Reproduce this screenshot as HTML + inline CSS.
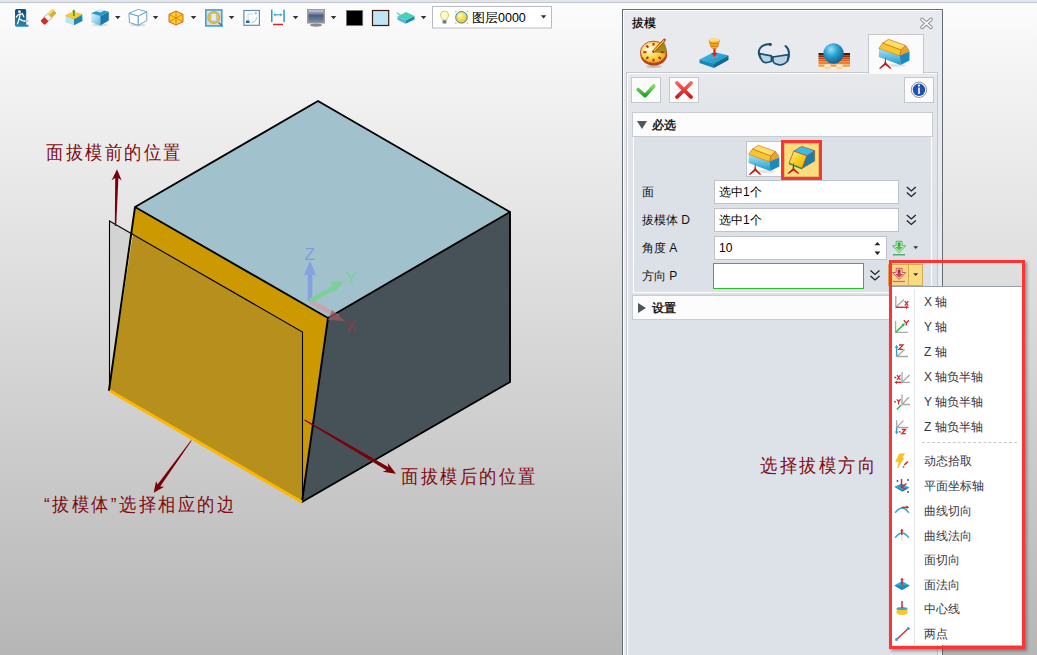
<!DOCTYPE html>
<html><head><meta charset="utf-8">
<style>
*{margin:0;padding:0;box-sizing:border-box}
html,body{width:1037px;height:655px;overflow:hidden}
body{position:relative;font-family:"Liberation Sans",sans-serif;background:linear-gradient(to bottom,#fdfdfd 0px,#f7f7f7 40px,#b6b6b6 655px);}
.a{position:absolute}
#topband{left:0;top:0;width:1037px;height:3px;background:#e1e4e8;border-bottom:1px solid #c3c7cd}
.note{position:absolute;color:#7e0a12;font-size:17px;letter-spacing:2.55px;white-space:nowrap;line-height:20px;transform:scaleY(1.1);transform-origin:0 0}
/* panel */
#panel{left:622px;top:9px;width:321px;height:660px;background:#e8eaed;border:1px solid #646c76;border-bottom:none;box-shadow:inset 1px 1px 0 #fff}
#title{left:9px;top:5px;font-size:12px;font-weight:500;color:#000;line-height:16px;-webkit-text-stroke:0.25px #000}
#tabpage{left:3px;top:62px;width:312px;height:600px;background:linear-gradient(#e7e9ec 0,#e2e5e9 40px,#dde1e8 240px);border:1px solid #c4c8ce;box-shadow:inset 1px 1px 0 #fff}
#acttab{left:245px;top:24px;width:56px;height:40px;background:#fbfbfb;border:1px solid #c4c8ce;border-bottom:none}
.btn{position:absolute;width:30px;height:26px;background:#fbfbfb;border:1px solid #c4c8cd}
.sechdr{position:absolute;left:9px;width:301px;height:25px;background:#fcfcfc;border:1px solid #c8ccd1}
.sechdr span{position:absolute;left:19px;top:4px;font-size:12px;font-weight:bold;color:#222}
.tri-d{position:absolute;left:4px;top:8px;width:0;height:0;border-left:5px solid transparent;border-right:5px solid transparent;border-top:8px solid #50555c}
.tri-r{position:absolute;left:5px;top:7px;width:0;height:0;border-top:5px solid transparent;border-bottom:5px solid transparent;border-left:8px solid #50555c}
#seccont{left:10px;top:127px;width:299px;height:156px;background:#dce0e7;border:1px solid #fff;border-top:none}
.lbl{position:absolute;font-size:12px;color:#111;white-space:nowrap;font-weight:500}
.inp{position:absolute;background:#fff;border:1px solid #bfc3c9;font-size:12px;color:#000;font-weight:500;padding-left:4px;line-height:22px}
.mi{font-size:12px;color:#363646;white-space:nowrap;line-height:16px}
</style></head>
<body>
<div id="topband" class="a"></div>


<!-- toolbar -->
<svg class="a" style="left:0;top:0" width="600" height="34" viewBox="0 0 600 34">
  <defs>
    <linearGradient id="gExit" x1="0" y1="0" x2="0" y2="1"><stop offset="0" stop-color="#0f4a78"/><stop offset="1" stop-color="#2a86b4"/></linearGradient>
    <linearGradient id="gCubeL" x1="0" y1="0" x2="1" y2="1"><stop offset="0" stop-color="#e4f6fc"/><stop offset="1" stop-color="#5cb8e0"/></linearGradient>
    <linearGradient id="gCubeT" x1="0" y1="0" x2="1" y2="0"><stop offset="0" stop-color="#2a9ac8"/><stop offset="0.5" stop-color="#7cc8e6"/><stop offset="1" stop-color="#1a84b8"/></linearGradient>
    <linearGradient id="gMon" x1="0" y1="0" x2="0" y2="1"><stop offset="0" stop-color="#c8d0dc"/><stop offset="0.45" stop-color="#4a5e80"/><stop offset="1" stop-color="#7a8cac"/></linearGradient>
    <radialGradient id="gSun" cx="0.4" cy="0.35" r="0.7"><stop offset="0" stop-color="#fff8b0"/><stop offset="1" stop-color="#e8c400"/></radialGradient>
  </defs>
  <!-- exit -->
  <path d="M16.6,9 h8 a1.6,1.6 0 0 1 1.6,1.6 v14.2 h2.2 v1.9 h-11.8 a1.6,1.6 0 0 1 -1.6,-1.6 v-14.5 a1.6,1.6 0 0 1 1.6,-1.6z" fill="url(#gExit)"/>
  <rect x="24.2" y="20.2" width="4.2" height="1.8" fill="#a8d4e8"/>
  <circle cx="19.4" cy="11.7" r="1.35" fill="#fff"/>
  <g stroke="#fff" stroke-width="1.25" fill="none" stroke-linecap="round" stroke-linejoin="round">
    <path d="M20.2,13.8 L19.2,19"/>
    <path d="M16.3,17 L18.3,14.6 L20.5,14.2 L22.3,13.6 L23.8,16.6"/>
    <path d="M19.2,19 L17.5,23.8"/>
    <path d="M19.3,19 L22.4,20.6 L24.3,21.2"/>
  </g>
  <!-- eraser -->
  <g transform="rotate(-45 48.5 17)">
    <rect x="40" y="14" width="6" height="6" rx="1.2" fill="#d42a2a"/>
    <rect x="45.5" y="14" width="5" height="6" fill="#f4f4f4" stroke="#8a8a8a" stroke-width="0.6"/>
    <rect x="50.5" y="14" width="6.5" height="6" rx="1" fill="#d8b030"/>
    <rect x="50.5" y="14" width="6.5" height="2.2" fill="#f0dc70"/>
  </g>
  <!-- box with arrow -->
  <polygon points="65.5,15.6 74,19 74,25.2 65.5,22.5" fill="#b8e4f4"/>
  <polygon points="74,19 82.2,14.4 82.5,21 74,25.2" fill="#1f86b8"/>
  <polygon points="65.5,15.6 73.3,12 82.2,14.4 74,19" fill="#f6d21c" stroke="#e09a40" stroke-width="0.5"/>
  <line x1="73.8" y1="16" x2="73.8" y2="11" stroke="#2aa040" stroke-width="1.6"/>
  <polygon points="72,11.5 75.6,11.5 73.8,9.5" fill="#2aa040"/>
  <!-- blue cube -->
  <ellipse cx="100" cy="25" rx="8" ry="1.5" fill="#000" opacity="0.12"/>
  <polygon points="91,13.3 100.3,16 100.3,25.6 91.4,22.5" fill="url(#gCubeL)"/>
  <polygon points="100.3,16 108.8,11.7 108.8,20.6 100.3,25.6" fill="#1a78ac"/>
  <polygon points="91,13.3 100.3,9.4 108.8,11.7 100.3,16" fill="#2a98c4"/>
  <polygon points="96,11.3 100.3,9.4 104.5,10.5 100.5,12.5" fill="#e8f6fc" opacity="0.9"/>
  <!-- wire cube -->
  <ellipse cx="138" cy="25" rx="8" ry="1.5" fill="#000" opacity="0.12"/>
  <g fill="#fff" stroke="#5b9ec4" stroke-width="0.9" stroke-linejoin="round">
    <polygon points="129,13.3 138.3,16 138.3,25.3 129.4,22.5"/>
    <polygon points="138.3,16 146.8,11.7 146.8,20.6 138.3,25.3"/>
    <polygon points="129,13.3 138.3,9.4 146.8,11.7 138.3,16"/>
  </g>
  <!-- orange cube -->
  <g stroke="#d2502a" stroke-width="0.9" stroke-linejoin="round">
    <polygon points="176,11 183,14.3 183,21.8 176,25 169,21.8 169,14.3" fill="#fad020"/>
    <path d="M169,14.3 L183,21.8 M183,14.3 L169,21.8 M176,11 L176,25" fill="none" stroke="#e07020" stroke-width="0.8"/>
  </g>
  <!-- zoom icon -->
  <rect x="205.8" y="9.9" width="16" height="16" fill="#d8dde2" stroke="#3aa4d4" stroke-width="1.6"/>
  <circle cx="213.8" cy="17.5" r="6" fill="#f2c420" stroke="#9a9a9a" stroke-width="0.8"/>
  <rect x="211" y="13.5" width="5.5" height="7.5" fill="#e0ecf4" stroke="#a0b0c0" stroke-width="0.5"/>
  <line x1="218.5" y1="22.5" x2="222.5" y2="26.3" stroke="#4a7aa0" stroke-width="1.4"/>
  <!-- fit window -->
  <rect x="243.9" y="10.5" width="15.5" height="14.8" fill="#fff" stroke="#6a8aa6" stroke-width="1.2"/>
  <path d="M248,20 v-6 h5" fill="none" stroke="#6ac0e0" stroke-width="0.8" stroke-dasharray="1.5,0.8"/>
  <path d="M256.5,17 q0,5 -5,5.5" fill="none" stroke="#6ac0e0" stroke-width="0.8"/>
  <rect x="246" y="20.5" width="3.5" height="2.5" fill="#1a6aa0"/>
  <circle cx="255.8" cy="13.2" r="1.2" fill="#8ad0ec"/>
  <!-- dimension -->
  <rect x="271" y="9.6" width="1.5" height="12.5" fill="#2a9ac8"/>
  <rect x="283.3" y="9.6" width="1.5" height="12.5" fill="#2a9ac8"/>
  <line x1="274.5" y1="14.8" x2="281.3" y2="14.8" stroke="#3aaad4" stroke-width="1.2"/>
  <polygon points="273.3,14.8 275.5,13.2 275.5,16.4" fill="#3aaad4"/>
  <polygon points="282.5,14.8 280.3,13.2 280.3,16.4" fill="#3aaad4"/>
  <line x1="273" y1="24.5" x2="283" y2="24.5" stroke="#d02828" stroke-width="1.5"/>
  <!-- monitor -->
  <ellipse cx="316" cy="25.2" rx="6" ry="1.6" fill="#8a8a8a"/>
  <rect x="307" y="9" width="18" height="14.5" fill="#9a9a9a"/>
  <rect x="308.5" y="10.2" width="15" height="12" fill="url(#gMon)"/>
  <!-- color squares -->
  <rect x="346.5" y="10.5" width="16.2" height="15" fill="#000" stroke="#777" stroke-width="0.8"/>
  <rect x="372.5" y="10.5" width="16.2" height="15" fill="#bee6f4" stroke="#3a1a10" stroke-width="1.2"/>
  <!-- teal box -->
  <polygon points="397.5,16.5 405.5,20.5 405.5,23.8 397.5,19.8" fill="#5ab0d0"/>
  <polygon points="405.5,20.5 414.5,16 414.5,19.5 405.5,23.8" fill="#1e88b0"/>
  <polygon points="397.5,16.5 406,12 414.5,16 405.5,20.5" fill="#48d0b8"/>
  <path d="M397,12.5 q2,3 5,3.5" fill="none" stroke="#48c0b0" stroke-width="1.2"/>
  <!-- carets -->
  <g fill="#333">
    <polygon points="115,16 120.5,16 117.75,19.2"/>
    <polygon points="152.8,16 158.3,16 155.55,19.2"/>
    <polygon points="190.8,16 196.3,16 193.55,19.2"/>
    <polygon points="228.8,16 234.3,16 231.55,19.2"/>
    <polygon points="292.8,16 298.3,16 295.55,19.2"/>
    <polygon points="330.8,16 336.3,16 333.55,19.2"/>
    <polygon points="420.8,16 426.3,16 423.55,19.2"/>
      </g>
  <!-- combo -->
  <rect x="432.5" y="6.5" width="119" height="21.5" fill="#fff" stroke="#b8bcc4" stroke-width="1"/>
  <path d="M444.5,11 a4,4 0 0 1 4,4 c0,2 -1.5,3 -1.8,5 h-4.4 c-0.3,-2 -1.8,-3 -1.8,-5 a4,4 0 0 1 4,-4z" fill="#fffbd0" stroke="#d8c040" stroke-width="0.9"/>
  <rect x="442.6" y="20.3" width="3.8" height="3.2" fill="#6a74a0"/>
  <circle cx="461.5" cy="17.3" r="5.8" fill="url(#gSun)" stroke="#2a70c0" stroke-width="0.9"/>
  <g fill="#e8d020"><rect x="455" y="10.8" width="1.6" height="1.6"/><rect x="466.6" y="10.8" width="1.6" height="1.6"/><rect x="455" y="22.2" width="1.6" height="1.6"/><rect x="466.6" y="22.2" width="1.6" height="1.6"/></g>
  <text x="472" y="22.3" font-family="Liberation Sans" font-size="12.5" fill="#000">图层0000</text>
  <polygon points="540.8,15.2 546.3,15.2 543.55,18.4" fill="#333"/>
</svg>

<!-- 3D scene -->
<svg class="a" style="left:0;top:0" width="1037" height="655" viewBox="0 0 1037 655">
  <!-- top face -->
  <polygon points="318,101 510,212 328,318 135,207" fill="#a1c1cd"/>
  <!-- right face -->
  <polygon points="328,318 510,212 510,382 302,502" fill="#465158"/>
  <!-- orange face bright -->
  <polygon points="135,207 328,318 302,502 109,390" fill="#cc9900"/>
  <!-- ghost only region -->
  <polygon points="109,221 302,332 302,502 109,390" fill="#d0d0d0" fill-opacity="0.0"/>
  <polygon points="109,221 133,235 109,390" fill="#d3d3d3"/>
  <!-- overlap -->
  <polygon points="133,235 302,332 302,502 109,390" fill="#b68f1c"/>
  <!-- ghost edges -->
  <polyline points="109.5,390 109.5,221 302.5,332 302.5,502" fill="none" stroke="#000" stroke-width="1.1"/>
  <!-- cube edges -->
  <polygon points="318,101 510,212 510,382 302,502 109,390 135,207" fill="none" stroke="#000" stroke-width="1.9" stroke-linejoin="miter"/>
  <polyline points="135,207 328,318 510,212" fill="none" stroke="#000" stroke-width="1.9"/>
  <line x1="328" y1="318" x2="302" y2="502" stroke="#000" stroke-width="1.9"/>
  <line x1="109.5" y1="390.5" x2="302" y2="502" stroke="#ffb800" stroke-width="3"/>
  <!-- triad -->
  <g opacity="0.75">
    <line x1="310" y1="301" x2="338" y2="317" stroke="#d89aa0" stroke-width="4.5"/>
    <polygon points="332,310 345,321 328,320" fill="#9a5a60"/>
    <line x1="310" y1="301" x2="310" y2="273" stroke="#7a98e6" stroke-width="4.5"/>
    <polygon points="304,275 316,275 310,261" fill="#7a98e6"/>
    <line x1="310" y1="301" x2="334" y2="288" stroke="#6fd58a" stroke-width="4.5"/>
    <polygon points="330,282 344,281 335,292" fill="#6fd58a"/>
  </g>
  <text x="304.5" y="259.6" font-family="Liberation Sans" font-size="17" fill="#7a98e6" opacity="0.85">Z</text>
  <text x="345.5" y="283.5" font-family="Liberation Sans" font-size="17" fill="#70d890" opacity="0.85">Y</text>
  <text x="345.5" y="332" font-family="Liberation Sans" font-size="17" fill="#8a4048" opacity="0.85">X</text>
  <!-- annotation arrows -->
  <g fill="#7a0008" stroke="none">
<polygon points="116.2,226.0 118.4,178.1 121.7,180.4 117.0,169.3 111.7,180.2 115.2,178.1 114.8,226.0"/>
<polygon points="191.0,440.3 157.5,484.6 156.1,480.9 153.7,492.7 164.2,486.7 160.2,486.6 191.6,440.7"/>
<polygon points="304.3,420.5 386.5,470.2 382.7,471.7 396.0,473.7 387.8,463.1 388.3,467.1 304.9,419.5"/>
<polygon points="890.8,480.3 829.4,479.3 831.6,476.1 820.6,481.0 831.6,486.1 829.4,482.9 890.8,482.5"/>
  </g>
</svg>

<div class="note" style="left:46px;top:142px">面拔模前的位置</div>
<div class="note" style="left:44px;top:494px">“拔模体”选择相应的边</div>
<div class="note" style="left:401px;top:466px">面拔模后的位置</div>

<!-- panel -->
<div id="panel" class="a">
  <div id="title" class="a">拔模</div>
  <div id="tabpage" class="a"></div>
  <div id="acttab" class="a"></div>
  <div class="btn" style="left:8px;top:67px"></div>
  <div class="btn" style="left:46px;top:67px"></div>
  <div class="btn" style="left:281px;top:67px"></div>
  <div class="sechdr" style="top:102px"><div class="tri-d"></div><span>必选</span></div>
  <div id="seccont" class="a"></div>
  <div class="lbl" style="left:19px;top:174px">面</div>
  <div class="lbl" style="left:19px;top:202px">拔模体 D</div>
  <div class="lbl" style="left:19px;top:230px">角度 A</div>
  <div class="lbl" style="left:19px;top:258px">方向 P</div>
  <div class="inp" style="left:91px;top:170px;width:185px;height:24px">选中1个</div>
  <div class="inp" style="left:91px;top:198px;width:185px;height:24px">选中1个</div>
  <div class="inp" style="left:91px;top:226px;width:173px;height:24px">10</div>
  <div class="inp" style="left:90px;top:253px;width:151px;height:26px;border:1.6px solid #28c028"></div>
  <div class="sechdr" style="top:285px;height:25px"><div class="tri-r"></div><span>设置</span></div>
</div>


<!-- panel icons overlay -->
<svg class="a" style="left:0;top:0" width="1037" height="655" viewBox="0 0 1037 655">
  <defs>
    <radialGradient id="gClock" cx="0.35" cy="0.35" r="0.75"><stop offset="0" stop-color="#fffbe8"/><stop offset="0.6" stop-color="#f8d040"/><stop offset="1" stop-color="#e0a020"/></radialGradient>
    <linearGradient id="gPlate" x1="0" y1="0" x2="1" y2="1"><stop offset="0" stop-color="#40c0e8"/><stop offset="1" stop-color="#1890c0"/></linearGradient>
    <radialGradient id="gSphere" cx="0.38" cy="0.3" r="0.75"><stop offset="0" stop-color="#9ae0f4"/><stop offset="0.45" stop-color="#2aa0d0"/><stop offset="1" stop-color="#0a5a8a"/></radialGradient>
    <linearGradient id="gGold" x1="0" y1="0" x2="1" y2="1"><stop offset="0" stop-color="#fff0a0"/><stop offset="0.5" stop-color="#f8d020"/><stop offset="1" stop-color="#e8a818"/></linearGradient>
    <linearGradient id="gBlue" x1="0" y1="0" x2="0" y2="1"><stop offset="0" stop-color="#a0e4f8"/><stop offset="1" stop-color="#1a98c8"/></linearGradient>
    <linearGradient id="gCheck" x1="0" y1="0" x2="0" y2="1"><stop offset="0" stop-color="#7ae060"/><stop offset="1" stop-color="#20a020"/></linearGradient>
    <linearGradient id="gX" x1="0" y1="0" x2="0" y2="1"><stop offset="0" stop-color="#ff6060"/><stop offset="1" stop-color="#d01818"/></linearGradient>
    <linearGradient id="gGreenArr" x1="0" y1="0" x2="0" y2="1"><stop offset="0" stop-color="#20a020"/><stop offset="1" stop-color="#60e050"/></linearGradient>
    <linearGradient id="gRedArr" x1="0" y1="0" x2="0" y2="1"><stop offset="0" stop-color="#b01030"/><stop offset="1" stop-color="#f05070"/></linearGradient>
  </defs>
  <!-- close X -->
  <path d="M922,19.3 L931,27.3 M931,19.3 L922,27.3" stroke="#8a8e94" stroke-width="3.6" stroke-linecap="round"/>
  <path d="M922,19.3 L931,27.3 M931,19.3 L922,27.3" stroke="#fdfdfd" stroke-width="1.6" stroke-linecap="round"/>
  <!-- tab1 clock -->
  <ellipse cx="654" cy="66.5" rx="8" ry="1.5" fill="#000" opacity="0.18"/>
  <ellipse cx="653.8" cy="55" rx="13.3" ry="10.5" fill="#b8401a"/>
  <ellipse cx="653.5" cy="52.2" rx="13" ry="11" fill="url(#gClock)" stroke="#c23c16" stroke-width="0.9"/>
  <path d="M653.5,52.2 L663.5,41.2 Q667,46 666.5,53.5z" fill="#9a8418" opacity="0.9"/>
  <g stroke="#b83212" stroke-width="2"><line x1="660.7" y1="52.2" x2="663.7" y2="52.2"/><line x1="658.6" y1="56.9" x2="660.7" y2="58.8"/><line x1="653.5" y1="58.8" x2="653.5" y2="61.6"/><line x1="648.4" y1="56.9" x2="646.3" y2="58.8"/><line x1="646.3" y1="52.2" x2="643.3" y2="52.2"/><line x1="648.4" y1="47.5" x2="646.3" y2="45.6"/><line x1="653.5" y1="45.6" x2="653.5" y2="42.8"/></g>
  <line x1="653.4" y1="51.6" x2="664.5" y2="40" stroke="#b83a10" stroke-width="2.6" stroke-linecap="round"/>
  <line x1="653.8" y1="51.2" x2="664.2" y2="40.4" stroke="#fbd840" stroke-width="1.1"/>
  <!-- tab2 joystick -->
  <polygon points="699.5,59.5 714,52 728.5,55.5 714,63.5" fill="url(#gPlate)"/>
  <polygon points="699.5,59.5 714,63.5 714,68 699.5,63" fill="#1a86b8"/>
  <polygon points="714,63.5 728.5,55.5 728.5,60 714,68" fill="#0e6a98"/>
  <ellipse cx="714.5" cy="57" rx="3.5" ry="1.6" fill="#5aa0c8"/>
  <line x1="714.5" y1="48" x2="714.5" y2="55" stroke="#e02020" stroke-width="2.2"/>
  <polygon points="711.5,53 717.5,53 714.5,57" fill="#e02020"/>
  <path d="M709,40 Q714.3,37.5 719.6,40 L717.8,47 Q716.5,48.8 714.3,48.8 Q712,48.8 710.8,47z" fill="#f2b020" stroke="#d07010" stroke-width="0.5"/>
  <ellipse cx="714.3" cy="40" rx="5.2" ry="1.7" fill="#ffe080"/>
  <g stroke="#c86010" stroke-width="0.7" fill="none"><path d="M709.6,43 Q714.3,44.5 719,43"/><path d="M710.3,45.8 Q714.3,47 718.3,45.8"/></g>
  <!-- tab3 glasses -->
  <g fill="none" stroke="#1a4e70" stroke-width="2" stroke-linecap="round">
    <path d="M760.5,58 C756,50 761,44 770.5,44"/>
    <path d="M785.5,46 C789.5,49 790,55 787.5,60.5"/>
  </g>
  <circle cx="770.2" cy="44.5" r="1.6" fill="#1a4e70"/>
  <path d="M759.6,53.6 L771.4,55.8 L771.5,61.2 Q766,63.5 763.5,62 Q760,59 759.6,53.6z" fill="#b8d4e4" stroke="#1a4e70" stroke-width="1.7" stroke-linejoin="round"/>
  <path d="M772.8,57 L788.6,54.7 L787.3,61.5 Q783,65.5 779.4,64.9 Q774,64 773.1,61.5z" fill="#b8d4e4" stroke="#1a4e70" stroke-width="1.7" stroke-linejoin="round"/>
  <line x1="771" y1="56.2" x2="773.2" y2="57.3" stroke="#1a4e70" stroke-width="1.5"/>
  <!-- tab4 sphere -->
  <g>
    <rect x="818.5" y="53" width="31.5" height="2" fill="#4a1808"/>
    <rect x="818.5" y="55.2" width="31.5" height="2" fill="#8a3010"/>
    <rect x="818.5" y="57.4" width="31.5" height="2" fill="#b84818"/>
    <rect x="818.5" y="59.6" width="31.5" height="2" fill="#d86020"/>
    <rect x="818.5" y="62" width="31.5" height="2.2" fill="#f08030"/>
    <rect x="818.5" y="64.5" width="31.5" height="2.3" fill="#f8a040"/>
    <rect x="818.5" y="67" width="31.5" height="2" fill="#ffd090"/>
    <rect x="824.5" y="64.5" width="6" height="2.3" fill="#fff0d8"/><rect x="836.5" y="64.5" width="6" height="2.3" fill="#fff0d8"/>
    <rect x="818.5" y="67" width="6" height="2" fill="#fff4e4"/><rect x="830.5" y="67" width="6" height="2" fill="#fff4e4"/><rect x="842.5" y="67" width="7" height="2" fill="#fff4e4"/>
  </g>
  <circle cx="833.5" cy="53.5" r="10.2" fill="url(#gSphere)"/>
  <!-- tab5 box -->
  <g id="boxicon">
    <ellipse cx="896" cy="65.5" rx="10" ry="1.5" fill="#000" opacity="0.1"/>
    <polygon points="878.9,48.9 899.8,55.8 900.5,65 878.9,57.1" fill="url(#gBlue)"/>
    <polygon points="899.8,55.8 909.5,51.3 909.5,60.6 900.5,65" fill="#1a8cbc"/>
    <polygon points="878.9,48.5 882.7,43 901.2,49.9 899.8,55.8" fill="#f6c830" stroke="#c85a20" stroke-width="0.6"/>
    <polygon points="882.7,43 888.5,39.3 905.7,45.5 901.2,49.9" fill="#fde060" stroke="#c85a20" stroke-width="0.6"/>
    <polygon points="901.2,49.9 905.7,45.5 909.1,50.6 899.8,55.8" fill="#e8a818" stroke="#c85a20" stroke-width="0.6"/>
    <path d="M885.4,57.1 L886.3,63 L891.6,68.5 L890,68.8 L885.4,65 L880.6,68.8 L878.9,68.5 L884.5,63z" fill="#c41a1a"/>
  </g>
  <!-- check / X / info -->
  <path d="M638.2,89.5 L645,95.8 L653.8,86" fill="none" stroke="url(#gCheck)" stroke-width="3.6" stroke-linejoin="round" stroke-linecap="round"/>
  <path d="M677,83 L691,97 M691,83 L677,97" fill="none" stroke="url(#gX)" stroke-width="3.8" stroke-linecap="round"/>
  <circle cx="919" cy="89.8" r="7.7" fill="#fafafa" stroke="#8a8a8a" stroke-width="0.9"/>
  <circle cx="919" cy="89.8" r="6.2" fill="#1f4fb8"/>
  <circle cx="919" cy="85.6" r="1.15" fill="#fff"/>
  <rect x="918.1" y="87.6" width="1.8" height="6.4" fill="#e8ecf4"/>
  <!-- section icons -->
  <rect x="746.5" y="141.5" width="35" height="35" fill="#fcfcfc" stroke="#c0c4ca" stroke-width="1"/>
  <use href="#boxicon" transform="translate(-130.2,106)"/>
  <rect x="782.5" y="141.5" width="38" height="37" fill="#fcdc7c" stroke="#fc3434" stroke-width="3"/>
  <rect x="784.5" y="143.5" width="34" height="33" fill="none" stroke="#e6bc60" stroke-width="1"/>
  <g>
    <polygon points="806.8,155.8 814.7,150.6 814.7,161 802.1,168.4" fill="#1880b0" stroke="#a04018" stroke-width="0.5"/>
    <polygon points="793.8,151.1 801.6,146.3 814.7,150.6 806.8,155.8" fill="#38bce8" stroke="#a04018" stroke-width="0.5"/>
    <polygon points="793.8,151.1 806.8,155.8 802.1,168.4 789,163.2" fill="url(#gGold)" stroke="#a04018" stroke-width="0.7"/>
    <line x1="789" y1="163.5" x2="802.1" y2="168.8" stroke="#20a040" stroke-width="1.4"/>
    <path d="M793.4,162 L794.2,168.5 L799.5,173.5 L798,173.8 L793.5,170.5 L789,173.8 L787.4,173.5 L792.6,168.5z" fill="#c41a1a"/>
  </g>
  <!-- chevrons -->
  <g fill="none" stroke="#222" stroke-width="1.3">
    <path d="M906.8,187 L911.3,191 L915.8,187 M906.8,192.5 L911.3,196.5 L915.8,192.5"/>
    <path d="M906.8,215 L911.3,219 L915.8,215 M906.8,220.5 L911.3,224.5 L915.8,220.5"/>
    <path d="M870.5,270.5 L875,274.5 L879.5,270.5 M870.5,276 L875,280 L879.5,276"/>
  </g>
  <!-- spin arrows -->
  <polygon points="874.5,245.3 880.3,245.3 877.4,242" fill="#222"/>
  <polygon points="874.5,251.6 880.3,251.6 877.4,255" fill="#222"/>
  <!-- green arrow -->
  <path d="M896.2,241.3 h5.8 v4.5 h3.6 l-6.5,6.8 l-6.5,-6.8 h3.6z" fill="#e8f8e8" stroke="#3cae50" stroke-width="0.9" stroke-linejoin="round"/>
  <path d="M897.6,242.6 h3 v4.5 h2.4 l-3.9,4 l-3.9,-4 h2.4z" fill="url(#gGreenArr)"/>
  <line x1="893" y1="254.8" x2="905" y2="254.8" stroke="#30a050" stroke-width="1.2"/>
  <polygon points="913.2,246.3 918.2,246.3 915.7,249" fill="#333"/>
  <!-- split button -->
  <rect x="888.5" y="264.5" width="34" height="21" fill="#fcdc80" stroke="#d8aa50" stroke-width="1"/>
  <rect x="889" y="265" width="19.5" height="20" fill="#f9d68a"/>
  <line x1="908.5" y1="265" x2="908.5" y2="285.5" stroke="#d8aa50" stroke-width="1"/>
  <path d="M896.2,268.3 h5.8 v4.3 h3.6 l-6.5,6.8 l-6.5,-6.8 h3.6z" fill="#fdf0f0" stroke="#b84a40" stroke-width="0.9" stroke-linejoin="round"/>
  <path d="M897.6,269.6 h3 v4.3 h2.4 l-3.9,4 l-3.9,-4 h2.4z" fill="url(#gRedArr)"/>
  <line x1="893" y1="281.5" x2="905" y2="281.5" stroke="#c87830" stroke-width="1.2"/>
  <polygon points="913.2,273.2 918.2,273.2 915.7,276" fill="#333"/>
</svg>

<div class="note" style="left:760px;top:455px">选择拔模方向</div>

<!-- menu -->
<div class="a" style="left:889px;top:260px;width:136px;height:389px;border:3px solid #fc3434;box-shadow:2px 2px 3px rgba(40,50,55,0.45)"></div>
<div class="a" style="left:892px;top:286px;width:130px;height:359px;background:#fff;border-top:1px solid #9aa0a8"></div>
<div class="a" style="left:914px;top:289px;width:1px;height:356px;background:#e2e4e8"></div>
<div class="a" style="left:922px;top:442px;width:95px;height:0;border-top:1px dashed #c8cacf"></div>
<div class="a mi" style="left:924px;top:294px">X 轴</div>
<div class="a mi" style="left:924px;top:319px">Y 轴</div>
<div class="a mi" style="left:924px;top:344px">Z 轴</div>
<div class="a mi" style="left:924px;top:369px">X 轴负半轴</div>
<div class="a mi" style="left:924px;top:394px">Y 轴负半轴</div>
<div class="a mi" style="left:924px;top:419px">Z 轴负半轴</div>
<div class="a mi" style="left:924px;top:453px">动态拾取</div>
<div class="a mi" style="left:924px;top:478px">平面坐标轴</div>
<div class="a mi" style="left:924px;top:503px">曲线切向</div>
<div class="a mi" style="left:924px;top:528px">曲线法向</div>
<div class="a mi" style="left:924px;top:552px">面切向</div>
<div class="a mi" style="left:924px;top:577px">面法向</div>
<div class="a mi" style="left:924px;top:601px">中心线</div>
<div class="a mi" style="left:924px;top:626px">两点</div>

<svg class="a" style="left:0;top:0" width="1037" height="655" viewBox="0 0 1037 655">
  <g stroke-linecap="butt">
    <!-- X -->
    <path d="M895.8,296 V307.3 L904,299.5" fill="none" stroke="#a8a8a8" stroke-width="1.3"/>
    <line x1="896" y1="307.3" x2="907" y2="307.3" stroke="#d42a2a" stroke-width="1.4"/>
    <polygon points="909,307.3 906,305.6 906,309" fill="#d42a2a"/>
    <path d="M904.8,301.2 L908.3,305.6 M908.3,301.2 L904.8,305.6" stroke="#d42a2a" stroke-width="1.3"/>
    <!-- Y -->
    <path d="M895.6,321 V332.3 H907.7" fill="none" stroke="#a8a8a8" stroke-width="1.3"/>
    <line x1="896" y1="332" x2="903.5" y2="324.6" stroke="#20c040" stroke-width="1.5"/>
    <polygon points="905,323 901.5,324.3 903.8,326.5" fill="#20c040"/>
    <path d="M903.8,320.3 L906.3,323 L908.8,320.3 M906.3,323 V325.6" fill="none" stroke="#d42a2a" stroke-width="1.3"/>
    <!-- Z -->
    <path d="M904.6,349.5 L896.8,356.5 H908" fill="none" stroke="#a8a8a8" stroke-width="1.3"/>
    <line x1="896.6" y1="356" x2="896.6" y2="347" stroke="#2aa0d0" stroke-width="1.4"/>
    <polygon points="896.6,344.8 894.8,348 898.4,348" fill="#2aa0d0"/>
    <path d="M898.9,345 H903 L898.9,349.3 H903.2" fill="none" stroke="#d42a2a" stroke-width="1.3"/>
    <!-- -X -->
    <path d="M902,372 V382.3 L909.6,375 M902,382.3 H910" fill="none" stroke="#a8a8a8" stroke-width="1.3"/>
    <line x1="901.5" y1="382.3" x2="896" y2="382.3" stroke="#d42a2a" stroke-width="1.4"/>
    <polygon points="894.3,382.3 897,380.7 897,383.9" fill="#d42a2a"/>
    <path d="M894.3,377.5 H896.3 M897,375 L900.4,380 M900.4,375 L897,380" fill="none" stroke="#d42a2a" stroke-width="1.3"/>
    <!-- -Y -->
    <path d="M902,394.6 V404.5 L908.8,397.3 M902,404.5 H910" fill="none" stroke="#a8a8a8" stroke-width="1.3"/>
    <line x1="901" y1="405.2" x2="896.8" y2="409.5" stroke="#20c040" stroke-width="1.5"/>
    <path d="M894,401.8 H896 M896.8,399.3 L898.6,401.6 L900.6,399.3 M898.6,401.6 V404.5" fill="none" stroke="#d42a2a" stroke-width="1.3"/>
    <!-- -Z -->
    <path d="M896.6,420.2 V427.5 L903.5,420.6 M896.6,427.5 H908.4" fill="none" stroke="#a8a8a8" stroke-width="1.3"/>
    <line x1="896.6" y1="428" x2="896.6" y2="432" stroke="#2aa0d0" stroke-width="1.4"/>
    <polygon points="896.6,434.5 894.8,431.5 898.4,431.5" fill="#2aa0d0"/>
    <path d="M898.9,431.8 H900.8 M901.8,429.5 H905.5 L901.8,433.7 H905.8" fill="none" stroke="#d42a2a" stroke-width="1.3"/>
    <!-- dynamic pick -->
    <path d="M899.5,453.8 L904.6,453.8 L901.8,458.6 L904,458.3 L897.6,468 L898.8,461.5 L895.6,461.8z" fill="#f8c818" stroke="#f0a030" stroke-width="0.4"/>
    <line x1="904.2" y1="465" x2="907.8" y2="461.6" stroke="#d42a2a" stroke-width="1.5"/>
    <circle cx="903.5" cy="467" r="1" fill="#2a9ad0"/>
    <!-- plane axes -->
    <polygon points="894.3,486.7 901.5,483.5 909.5,487.5 902.5,491.5" fill="#2aa8d8"/>
    <polygon points="894.3,486.7 902.5,491.5 909.5,487.5 902.5,490" fill="#1478a8"/>
    <path d="M901.5,479 V487 L906.5,483.5" fill="none" stroke="#d42a2a" stroke-width="1.5"/>
    <line x1="901.5" y1="487" x2="906" y2="489.5" stroke="#d42a2a" stroke-width="1.2"/>
    <g fill="#1a5080"><circle cx="897.5" cy="481" r="0.9"/><circle cx="908" cy="480" r="0.9"/><circle cx="908" cy="492" r="0.9"/></g>
    <!-- curve tangent -->
    <path d="M895.2,512.8 Q902,503 908.8,512.8" fill="none" stroke="#2aa8d8" stroke-width="1.5"/>
    <line x1="901.5" y1="507.5" x2="907.5" y2="507.3" stroke="#d42a2a" stroke-width="1.6"/>
    <polygon points="909.3,507.3 906.5,505.6 906.5,509" fill="#d42a2a"/>
    <!-- curve normal -->
    <path d="M895.2,537.8 Q902,528 908.8,537.8" fill="none" stroke="#2aa8d8" stroke-width="1.5"/>
    <line x1="901.8" y1="535" x2="901.8" y2="530" stroke="#d42a2a" stroke-width="1.6"/>
    <polygon points="901.8,528.5 900,531.3 903.6,531.3" fill="#d42a2a"/>
    <line x1="901.8" y1="535.5" x2="901.8" y2="541.5" stroke="#999" stroke-width="0.8" stroke-dasharray="1,1"/>
    <!-- surface normal -->
    <polygon points="894.3,585.5 902,580.9 909.8,585.5 902,590" fill="#2aa8d8"/>
    <polygon points="894.3,585.5 909.8,585.5 902,590" fill="#1a88b8"/>
    <line x1="902" y1="585" x2="902" y2="579.5" stroke="#d42a2a" stroke-width="1.6"/>
    <polygon points="902,577.5 900.2,580.3 903.8,580.3" fill="#d42a2a"/>
    <!-- center line -->
    <path d="M896.6,608.5 V613.7 Q902,616.5 907.5,613.7 V608.5z" fill="#f8c828"/>
    <ellipse cx="902" cy="608.5" rx="5.5" ry="1.6" fill="#38a8d0"/>
    <line x1="902" y1="601" x2="902" y2="608" stroke="#d42a2a" stroke-width="1.5"/>
    <!-- two points -->
    <line x1="896.5" y1="639.5" x2="908.3" y2="628.6" stroke="#d42a2a" stroke-width="1.4"/>
    <circle cx="896.5" cy="639.5" r="1.5" fill="#3aa0d0"/>
    <circle cx="908.3" cy="628.6" r="1.5" fill="#3aa0d0"/>
  </g>
</svg>

</body></html>
